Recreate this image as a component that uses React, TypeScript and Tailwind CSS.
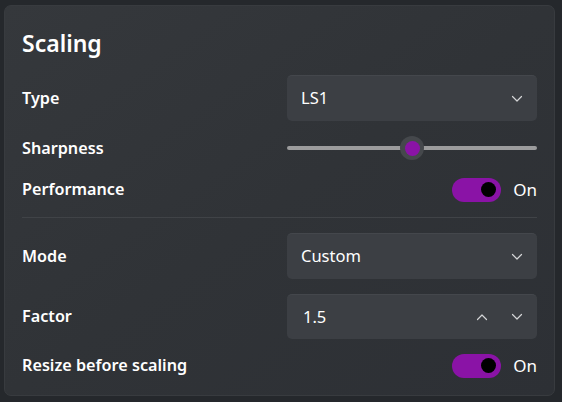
import React from "react";

const Chevron = ({ up = false }: { up?: boolean }) => (
  <svg width="12" height="8" viewBox="0 0 12 8" fill="none" className="shrink-0">
    <path
      d={up ? "M1.5 6.5 L6 2 L10.5 6.5" : "M1.5 1.5 L6 6 L10.5 1.5"}
      stroke="#d4d5d7"
      strokeWidth="1.2"
      strokeLinecap="round"
      strokeLinejoin="round"
    />
  </svg>
);

const Toggle = () => (
  <div className="flex items-center">
    <div className="w-[49px] h-[24px] rounded-full bg-[#8a13a6] flex items-center justify-end pr-[5px]">
      <div className="w-[15px] h-[15px] rounded-full bg-black" />
    </div>
    <span className="ml-[12px] text-[17px] text-white leading-none">On</span>
  </div>
);

const Label = ({ children }: { children: React.ReactNode }) => (
  <span className="text-[16.2px] font-semibold text-white">{children}</span>
);

const Box = ({ children }: { children: React.ReactNode }) => (
  <div className="w-[250px] h-full rounded-[5px] bg-[#3c3f44] border-t border-[#44474c] flex items-center pl-[14px] pr-[14px] text-[16.5px] text-white">
    {children}
  </div>
);

export default function App() {
  return (
    <div
      className="w-[562px] h-[402px] bg-[#25282c] pt-[5px] pl-[4px]"
      style={{ fontFamily: '"Noto Sans", "Open Sans", sans-serif' }}
    >
      <div className="w-[551px] h-[391px] rounded-[7px] bg-gradient-to-br from-[#35383c] via-[#303337] to-[#2d3035] border border-[#383b3f] pl-[17px] pr-[17px] pt-[22px] flex flex-col">
        <div className="h-[30px] flex items-center text-[23px] font-semibold text-white">Scaling</div>

        <div className="mt-[17px] h-[46px] flex items-center justify-between">
          <Label>Type</Label>
          <Box>
            <span className="flex-1">LS1</span>
            <Chevron />
          </Box>
        </div>

        <div className="mt-[11px] h-[32px] flex items-center justify-between">
          <Label>Sharpness</Label>
          <div className="w-[250px] h-full relative flex items-center">
            <div className="w-full h-[4px] rounded-full bg-[#9c9c9d]" />
            <div className="absolute left-[113px] top-[4px] w-[24px] h-[24px] rounded-full bg-[#45484c] flex items-center justify-center">
              <div className="w-[15px] h-[15px] rounded-full bg-[#8a13a6]" />
            </div>
          </div>
        </div>

        <div className="mt-[13px] h-[25px] flex items-center justify-between">
          <Label>Performance</Label>
          <Toggle />
        </div>

        <div className="mt-[15px] h-px bg-[#404347]" />

        <div className="mt-[15px] h-[46px] flex items-center justify-between">
          <Label>Mode</Label>
          <Box>
            <span className="flex-1">Custom</span>
            <Chevron />
          </Box>
        </div>

        <div className="mt-[15px] h-[45px] flex items-center justify-between">
          <Label>Factor</Label>
          <Box>
            <span className="flex-1 pl-[2px]">1.5</span>
            <span className="mr-[23px] flex"><Chevron up /></span>
            <Chevron />
          </Box>
        </div>

        <div className="mt-[14px] h-[25px] flex items-center justify-between">
          <Label>Resize before scaling</Label>
          <Toggle />
        </div>
      </div>
    </div>
  );
}
